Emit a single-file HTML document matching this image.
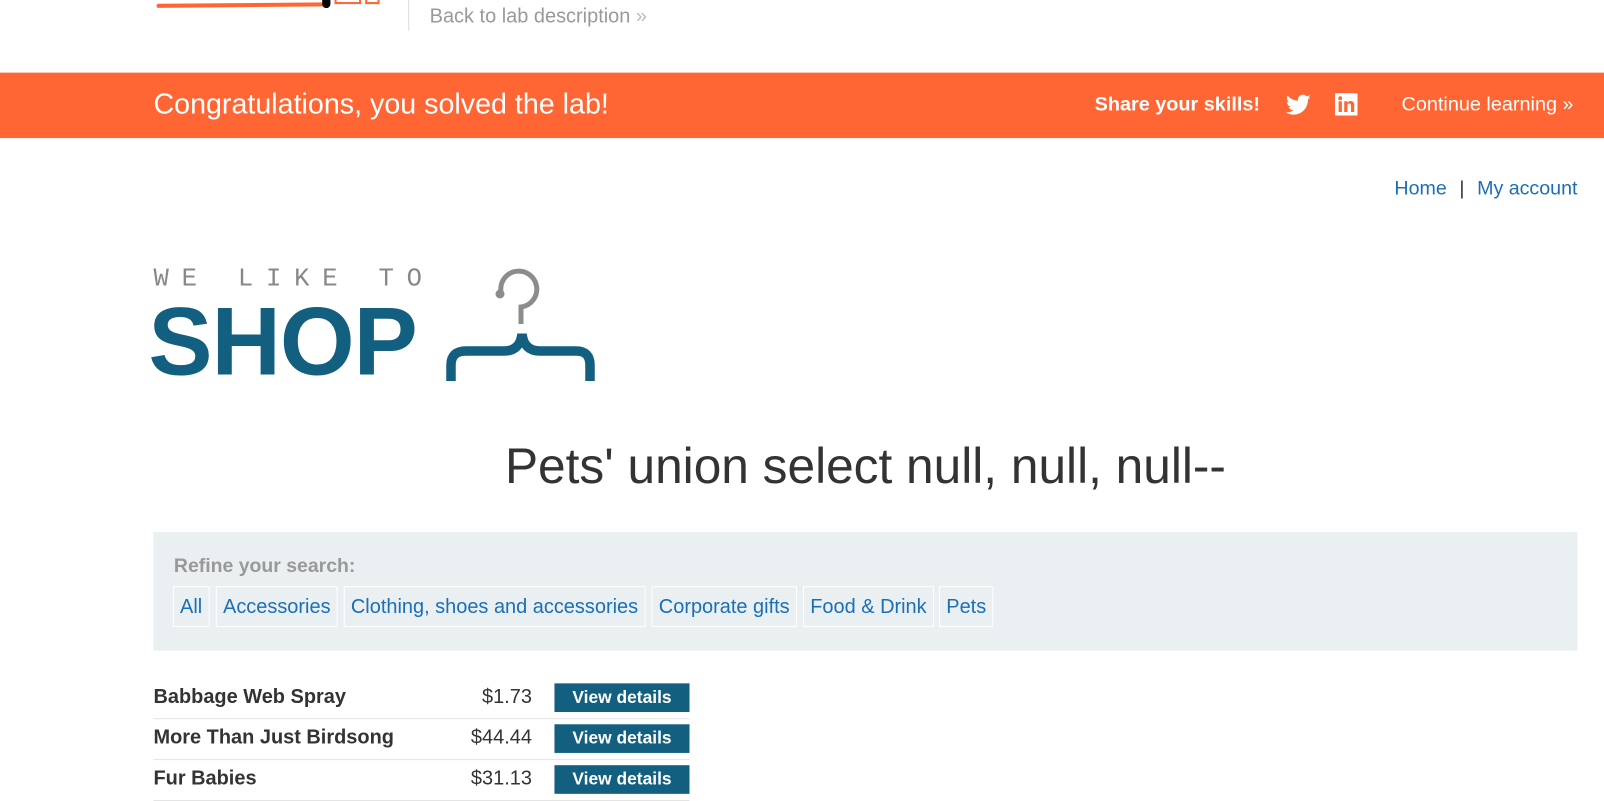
<!DOCTYPE html>
<html><head><meta charset="utf-8"><style>
*{margin:0;padding:0;box-sizing:border-box}
body{width:1604px;height:792px;overflow:hidden;background:#fff;font-family:"Liberation Sans",Arial,sans-serif;position:relative}
#w{position:absolute;left:0;top:0;width:1568px;height:775px;transform:scale(1.023);transform-origin:0 0}
.a{position:absolute;white-space:nowrap}
.fb{position:absolute;top:573px;height:40px;border:1px solid #fff;color:#1a6fb5;font-size:19.5px;line-height:38px;padding:0 6px}
.row{position:absolute;left:150px;width:524px;height:35px;border-bottom:1px solid #e4e4e4}
.row .n{position:absolute;left:0;top:2px;font-weight:bold;font-size:19.5px;color:#333}
.row .p{position:absolute;right:154px;top:2px;font-size:19.5px;color:#333}
.row .b{position:absolute;left:392px;top:0;width:132px;height:28px;background:#125f80;color:#fff;font-weight:bold;font-size:17px;text-align:center;line-height:28px}
</style></head><body>
<div id="w">
<div class="a" style="left:153px;top:3px;width:168px;height:4px;background:#ff6633;border-radius:2px;transform:rotate(-0.5deg)"></div>
<div class="a" style="left:315px;top:0;width:8px;height:8px;background:#000;border-radius:0 0 4px 4px"></div>
<div class="a" style="left:327px;top:-2px;width:26px;height:6px;border:2px solid #ff6633;border-top:none"></div>
<div class="a" style="left:357px;top:-2px;width:14px;height:6px;border:2px solid #ff6633;border-top:none"></div>
<div class="a" style="left:399px;top:0;width:1px;height:30px;background:#ddd"></div>
<div class="a" style="left:420px;top:5px;font-size:19.5px;color:#999">Back to lab description <span style="color:#bbb">&#187;</span></div>

<div class="a" style="left:0;top:71px;width:1604px;height:64px;background:#ff6633"></div>
<div class="a" style="left:150px;top:86px;font-size:28px;color:#fff">Congratulations, you solved the lab!</div>
<div class="a" style="left:1070px;top:91px;font-size:19.4px;color:#fff;font-weight:bold">Share your skills!</div>
<svg class="a" style="left:1257px;top:92px" width="24" height="21" viewBox="0 0 24 20"><path fill="#fff" d="M24 2.4c-.9.4-1.8.7-2.8.8 1-.6 1.8-1.6 2.2-2.7-1 .6-2 1-3.1 1.2C19.4.7 18.1 0 16.6 0c-2.7 0-4.9 2.2-4.9 4.9 0 .4 0 .8.1 1.1C7.7 5.8 4.1 3.9 1.7.9c-.4.7-.7 1.6-.7 2.5 0 1.7.9 3.2 2.2 4.1-.8 0-1.6-.2-2.2-.6v.1c0 2.4 1.7 4.4 3.9 4.8-.4.1-.8.2-1.3.2-.3 0-.6 0-.9-.1.6 2 2.4 3.4 4.6 3.4-1.7 1.3-3.8 2.1-6.1 2.1-.4 0-.8 0-1.2-.1 2.2 1.4 4.8 2.2 7.5 2.2 9.1 0 14-7.5 14-14v-.6c1-.7 1.8-1.6 2.5-2.5z"/></svg>
<svg class="a" style="left:1305px;top:91px" width="22" height="22" viewBox="0 0 22 22"><rect width="22" height="22" rx="1" fill="#fff"/><rect x="3.5" y="8" width="3.2" height="10.5" fill="#ff6633"/><circle cx="5.1" cy="5" r="1.9" fill="#ff6633"/><path fill="#ff6633" d="M9 8h3v1.5c.6-1 1.7-1.8 3.3-1.8 3 0 3.5 2 3.5 4.5v6.3h-3.2v-5.5c0-1.3 0-2.8-1.7-2.8s-1.8 1.3-1.800 2.7v5.6H9z"/></svg>
<div class="a" style="left:1370px;top:91px;font-size:19.4px;color:#fff">Continue learning <span style="font-size:19px">&#187;</span></div>

<div class="a" style="right:26px;top:174px;font-size:19.2px;color:#1a6fb5">Home <span style="color:#333;margin:0 7px">|</span> My account</div>

<div class="a" style="left:150px;top:263px;font-family:'Liberation Mono',monospace;font-size:25px;letter-spacing:12.5px;color:#888;line-height:20px">WE LIKE TO</div>
<div class="a" style="left:145px;top:284px;font-size:94px;font-weight:bold;color:#125f80;letter-spacing:-1px;line-height:100px">SHOP</div>

<div class="a" style="left:0;width:1692px;top:428px;text-align:center;font-size:48.5px;color:#333">Pets' union select null, null, null--</div>

<div class="a" style="left:150px;top:520px;width:1392px;height:116px;background:#eaeff2"></div>
<div class="a" style="left:170px;top:543px;font-size:19px;font-weight:bold;color:#999">Refine your search:</div>
<div class="fb" style="left:169px">All</div>
<div class="fb" style="left:211px">Accessories</div>
<div class="fb" style="left:336px">Clothing, shoes and accessories</div>
<div class="fb" style="left:637px">Corporate gifts</div>
<div class="fb" style="left:785px">Food &amp; Drink</div>
<div class="fb" style="left:918px">Pets</div>

<div class="row" style="top:668px"><span class="n">Babbage Web Spray</span><span class="p">$1.73</span><span class="b">View details</span></div>
<div class="row" style="top:708px"><span class="n">More Than Just Birdsong</span><span class="p">$44.44</span><span class="b">View details</span></div>
<div class="row" style="top:748px"><span class="n">Fur Babies</span><span class="p">$31.13</span><span class="b">View details</span></div>
</div>
<svg class="a" style="left:442px;top:266px" width="160" height="115" viewBox="0 0 160 115">
<path d="M59 26 A18 18 0 1 1 79 41 L79 58" fill="none" stroke="#8c8c8c" stroke-width="5"/>
<circle cx="58" cy="28" r="4.5" fill="#8c8c8c"/>
<path d="M9 115 V99 Q9 85 24 85 H62 Q78 85 80 68 Q82 85 98 85 H134 Q148 85 148 99 V115" fill="none" stroke="#125f80" stroke-width="9.5"/>
</svg>
</body></html>
